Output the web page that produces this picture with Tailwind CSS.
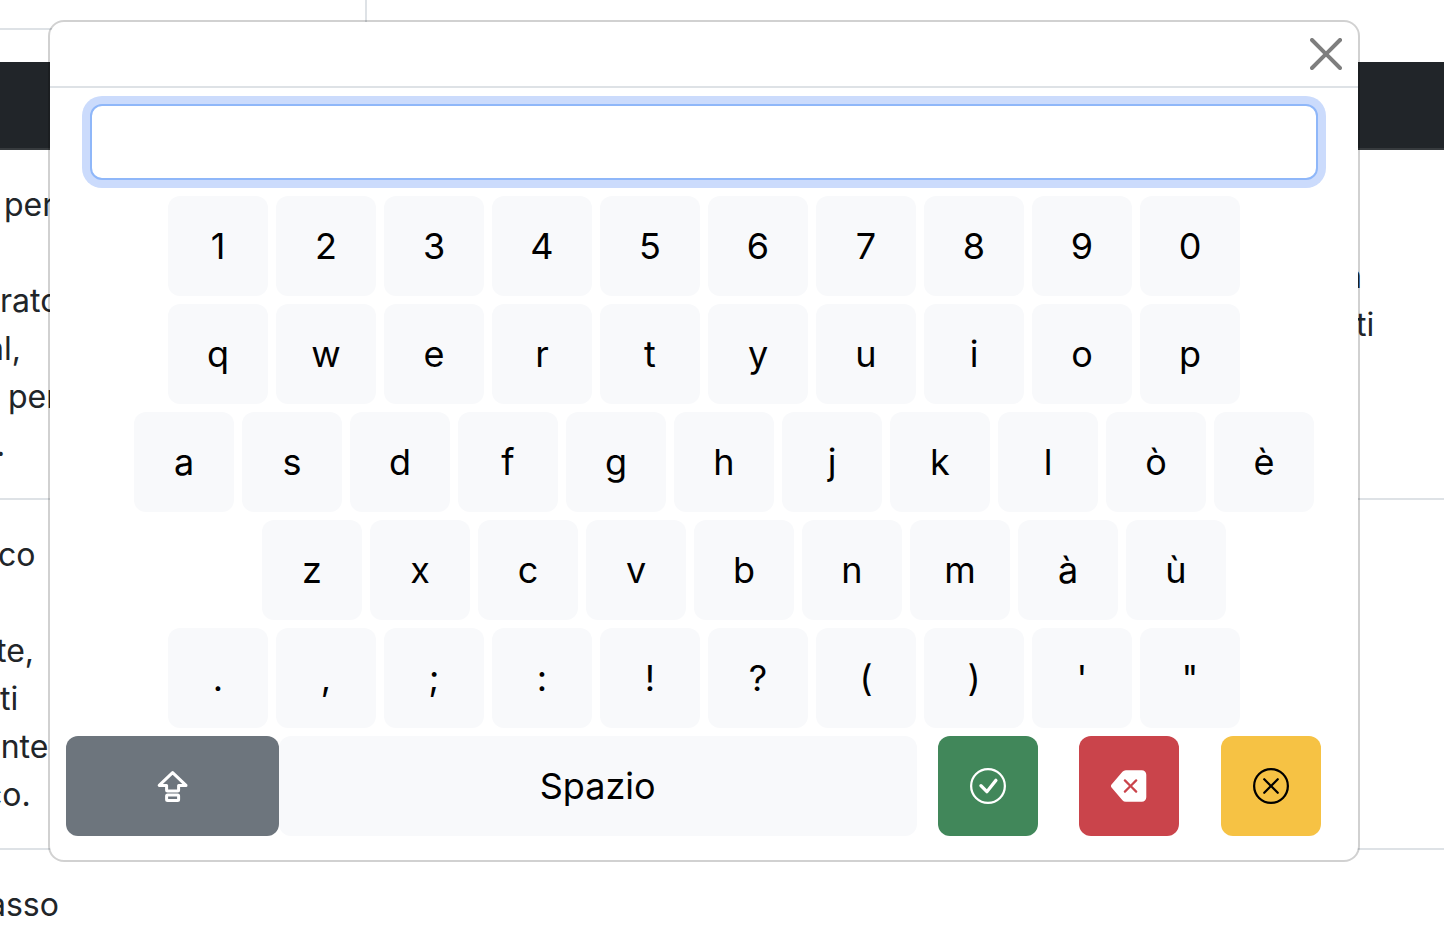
<!DOCTYPE html>
<html lang="it">
<head>
    <meta charset="UTF-8">
    <meta name="viewport" content="width=device-width, initial-scale=1.0">
    <title>Tastiera</title>
    <script src="https://cdn.jsdelivr.net/npm/@tailwindcss/browser@4"></script>
</head>
<body class="relative min-h-screen overflow-hidden bg-white font-['Inter','Liberation_Sans',sans-serif] text-[32px] leading-[48px] text-[#212529]">
    <!-- Page content -->
    <div class="h-[30px] w-[367px] border-r-2 border-b-2 border-[#dee2e6]"></div>
    <div class="mt-8 h-[88px] border-b-2 border-[#373b3e] bg-[#212529]"></div>

    <main class="whitespace-nowrap">
        <section class="flex justify-between border-b-2 border-[#dee2e6] pt-[31px] pb-[29px]">
            <div>
                <p class="ml-1">per</p>
                <p class="mt-12">rato</p>
                <p class="-ml-3.5">al,</p>
                <p class="ml-2">per</p>
                <p class="-ml-1">.</p>
            </div>
            <div class="w-[88px] pt-[72px]">
                <p class="-ml-3">a</p>
                <p>ti</p>
            </div>
        </section>
        <section class="border-b-2 border-[#dee2e6] pt-[31px] pb-[29px]">
            <p class="-ml-0.5">co</p>
            <p class="-ml-1 mt-12">te,</p>
            <p>ti</p>
            <p class="-ml-4.5">ente</p>
            <p class="-ml-4">co.</p>
        </section>
        <section class="pt-[31px]">
            <p class="-ml-3">asso</p>
        </section>
    </main>

    <!-- Keyboard modal -->
    <div role="dialog" aria-label="Tastiera" class="absolute top-5 right-[84px] left-12 rounded-2xl border-2 border-black/18 bg-white bg-clip-padding text-black">
        <div class="flex justify-end border-b-2 border-[#dee2e6] p-4">
            <button type="button" aria-label="Chiudi" class="opacity-50">
                <svg class="size-8" viewBox="0 0 16 16" fill="currentColor"><path d="M.293.293a1 1 0 0 1 1.414 0L8 6.586 14.293.293a1 1 0 1 1 1.414 1.414L9.414 8l6.293 6.293a1 1 0 0 1-1.414 1.414L8 9.414l-6.293 6.293a1 1 0 0 1-1.414-1.414L6.586 8 .293 1.707a1 1 0 0 1 0-1.414z"/></svg>
            </button>
        </div>

        <div class="flex flex-col gap-2 px-4 pt-4 pb-6 text-4xl">
            <div class="mb-2 flex px-6">
                <input type="text" aria-label="Testo" class="h-19 w-full rounded-xl border-2 border-[#8fb7f9] bg-white px-6 ring-8 ring-[#cbdbfc] outline-none">
            </div>

            <div class="flex justify-center gap-2">
                <button type="button" class="size-25 rounded-xl bg-[#f8f9fb]">1</button>
                <button type="button" class="size-25 rounded-xl bg-[#f8f9fb]">2</button>
                <button type="button" class="size-25 rounded-xl bg-[#f8f9fb]">3</button>
                <button type="button" class="size-25 rounded-xl bg-[#f8f9fb]">4</button>
                <button type="button" class="size-25 rounded-xl bg-[#f8f9fb]">5</button>
                <button type="button" class="size-25 rounded-xl bg-[#f8f9fb]">6</button>
                <button type="button" class="size-25 rounded-xl bg-[#f8f9fb]">7</button>
                <button type="button" class="size-25 rounded-xl bg-[#f8f9fb]">8</button>
                <button type="button" class="size-25 rounded-xl bg-[#f8f9fb]">9</button>
                <button type="button" class="size-25 rounded-xl bg-[#f8f9fb]">0</button>
            </div>
            <div class="flex justify-center gap-2">
                <button type="button" class="size-25 rounded-xl bg-[#f8f9fb]">q</button>
                <button type="button" class="size-25 rounded-xl bg-[#f8f9fb]">w</button>
                <button type="button" class="size-25 rounded-xl bg-[#f8f9fb]">e</button>
                <button type="button" class="size-25 rounded-xl bg-[#f8f9fb]">r</button>
                <button type="button" class="size-25 rounded-xl bg-[#f8f9fb]">t</button>
                <button type="button" class="size-25 rounded-xl bg-[#f8f9fb]">y</button>
                <button type="button" class="size-25 rounded-xl bg-[#f8f9fb]">u</button>
                <button type="button" class="size-25 rounded-xl bg-[#f8f9fb]">i</button>
                <button type="button" class="size-25 rounded-xl bg-[#f8f9fb]">o</button>
                <button type="button" class="size-25 rounded-xl bg-[#f8f9fb]">p</button>
            </div>
            <div class="flex justify-center gap-2 pl-10">
                <button type="button" class="size-25 rounded-xl bg-[#f8f9fb]">a</button>
                <button type="button" class="size-25 rounded-xl bg-[#f8f9fb]">s</button>
                <button type="button" class="size-25 rounded-xl bg-[#f8f9fb]">d</button>
                <button type="button" class="size-25 rounded-xl bg-[#f8f9fb]">f</button>
                <button type="button" class="size-25 rounded-xl bg-[#f8f9fb]">g</button>
                <button type="button" class="size-25 rounded-xl bg-[#f8f9fb]">h</button>
                <button type="button" class="size-25 rounded-xl bg-[#f8f9fb]">j</button>
                <button type="button" class="size-25 rounded-xl bg-[#f8f9fb]">k</button>
                <button type="button" class="size-25 rounded-xl bg-[#f8f9fb]">l</button>
                <button type="button" class="size-25 rounded-xl bg-[#f8f9fb]">ò</button>
                <button type="button" class="size-25 rounded-xl bg-[#f8f9fb]">è</button>
            </div>
            <div class="flex justify-center gap-2 pl-20">
                <button type="button" class="size-25 rounded-xl bg-[#f8f9fb]">z</button>
                <button type="button" class="size-25 rounded-xl bg-[#f8f9fb]">x</button>
                <button type="button" class="size-25 rounded-xl bg-[#f8f9fb]">c</button>
                <button type="button" class="size-25 rounded-xl bg-[#f8f9fb]">v</button>
                <button type="button" class="size-25 rounded-xl bg-[#f8f9fb]">b</button>
                <button type="button" class="size-25 rounded-xl bg-[#f8f9fb]">n</button>
                <button type="button" class="size-25 rounded-xl bg-[#f8f9fb]">m</button>
                <button type="button" class="size-25 rounded-xl bg-[#f8f9fb]">à</button>
                <button type="button" class="size-25 rounded-xl bg-[#f8f9fb]">ù</button>
            </div>
            <div class="flex justify-center gap-2">
                <button type="button" class="size-25 rounded-xl bg-[#f8f9fb]">.</button>
                <button type="button" class="size-25 rounded-xl bg-[#f8f9fb]">,</button>
                <button type="button" class="size-25 rounded-xl bg-[#f8f9fb]">;</button>
                <button type="button" class="size-25 rounded-xl bg-[#f8f9fb]">:</button>
                <button type="button" class="size-25 rounded-xl bg-[#f8f9fb]">!</button>
                <button type="button" class="size-25 rounded-xl bg-[#f8f9fb]">?</button>
                <button type="button" class="size-25 rounded-xl bg-[#f8f9fb]">(</button>
                <button type="button" class="size-25 rounded-xl bg-[#f8f9fb]">)</button>
                <button type="button" class="size-25 rounded-xl bg-[#f8f9fb]">'</button>
                <button type="button" class="size-25 rounded-xl bg-[#f8f9fb]">"</button>
            </div>

            <!-- Action keys -->
            <div class="grid grid-cols-12">
                <button type="button" aria-label="Maiuscole" class="col-span-2 flex h-25 items-center justify-center rounded-xl bg-[#6d757d] text-white">
                    <svg class="size-9" viewBox="0 0 36 36" fill="none" stroke="currentColor" stroke-width="3" stroke-linejoin="round"><path d="M18.6 4.6 5.2 17.4H12.6v4.6q0 1 1 1h10q1 0 1-1v-4.6h7.4z"/><rect x="12.6" y="27" width="12" height="5.6" rx="1"/></svg>
                </button>
                <button type="button" class="col-span-6 h-25 rounded-xl bg-[#f8f9fb]">Spazio</button>
                <div class="col-span-4 flex justify-around">
                    <button type="button" aria-label="Conferma" class="flex size-25 items-center justify-center rounded-xl bg-[#41875a] text-white">
                        <svg class="size-9" viewBox="0 0 16 16" fill="currentColor"><path d="M8 15A7 7 0 1 1 8 1a7 7 0 0 1 0 14zm0 1A8 8 0 1 0 8 0a8 8 0 0 0 0 16z"/><path d="M10.97 4.97a.235.235 0 0 0-.02.022L7.477 9.417 5.384 7.323a.75.75 0 0 0-1.06 1.06L6.97 11.03a.75.75 0 0 0 1.079-.02l3.992-4.99a.75.75 0 0 0-1.071-1.05z"/></svg>
                    </button>
                    <button type="button" aria-label="Cancella" class="flex size-25 items-center justify-center rounded-xl bg-[#ca444b] text-white">
                        <svg class="size-9" viewBox="0 0 16 16" fill="currentColor"><path d="M15.683 3a2 2 0 0 0-2-2h-7.08a2 2 0 0 0-1.519.698L.241 7.35a1 1 0 0 0 0 1.302l4.843 5.65A2 2 0 0 0 6.603 15h7.08a2 2 0 0 0 2-2V3zM5.829 5.854a.5.5 0 1 1 .707-.708l2.147 2.147 2.146-2.147a.5.5 0 1 1 .707.708L9.39 8l2.146 2.146a.5.5 0 0 1-.707.708L8.683 8.707l-2.147 2.147a.5.5 0 0 1-.707-.708L7.976 8 5.829 5.854z"/></svg>
                    </button>
                    <button type="button" aria-label="Annulla" class="flex size-25 items-center justify-center rounded-xl bg-[#f6c244]">
                        <svg class="size-9" viewBox="0 0 16 16" fill="currentColor"><path d="M8 15A7 7 0 1 1 8 1a7 7 0 0 1 0 14zm0 1A8 8 0 1 0 8 0a8 8 0 0 0 0 16z"/><path d="M4.646 4.646a.5.5 0 0 1 .708 0L8 7.293l2.646-2.647a.5.5 0 0 1 .708.708L8.707 8l2.647 2.646a.5.5 0 0 1-.708.708L8 8.707l-2.646 2.647a.5.5 0 0 1-.708-.708L7.293 8 4.646 5.354a.5.5 0 0 1 0-.708z"/></svg>
                    </button>
                </div>
            </div>
        </div>
    </div>
</body>
</html>
